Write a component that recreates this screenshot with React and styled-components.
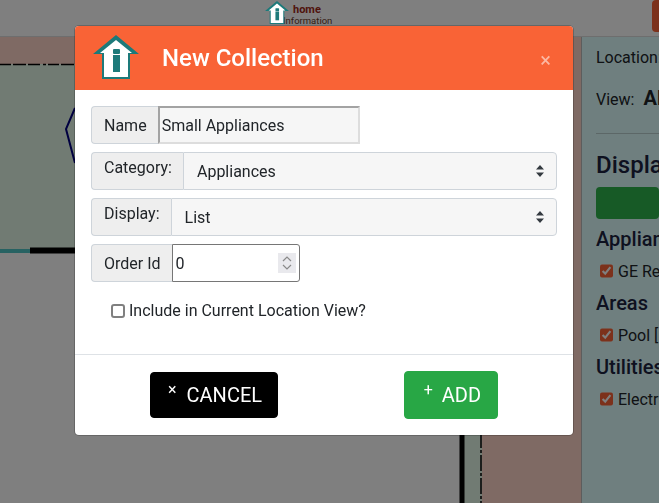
import React from 'react'
import styled, { createGlobalStyle } from 'styled-components'

const GlobalStyle = createGlobalStyle`
  html, body {
    margin: 0;
    height: 100%;
    overflow: hidden;
    font-family: Roboto, "Liberation Sans", sans-serif;
    font-size: 16px;
    color: #212529;
  }
`;

const Page = styled.div`
  width: 659px;
  height: 503px;
  display: flex;
  flex-direction: column;
  background: #fff;
  overflow: hidden;
`;

const Header = styled.header`
  height: 37px;
  flex: none;
  display: flex;
  justify-content: flex-end;
  position: relative;
  border-bottom: 1px solid #ddd;
  box-sizing: border-box;
`;

const Brand = styled.div`
  position: absolute;
  left: 265px;
  top: 1px;
  display: flex;
`;

const BrandMark = styled.div`
  position: relative;
  z-index: 1;
  height: 24px;
`;

const BrandText = styled.div`
  margin-left: -6px;
  padding-top: 3px;
  font-size: 9.5px;
  line-height: 11px;
  color: #6a3a2a;
`;

const BrandName = styled.div`
  margin-left: 10px;
  font-size: 11px;
  font-weight: 700;
  color: #a02818;
`;

const HeaderButton = styled.div`
  width: 20px;
  height: 32px;
  margin-right: -13px;
  border-radius: 4px;
  background: #f96336;
`;

const Main = styled.main`
  flex: 1;
  display: flex;
  min-height: 0;
`;

const Canvas = styled.div`
  width: 581px;
  flex: none;
  height: 100%;
`;

const Plan = styled.svg`
  display: block;
`;

const Sidebar = styled.aside`
  flex: 1;
  min-width: 0;
  overflow: hidden;
  white-space: nowrap;
  padding: 9px 0 0 14px;
  background: #deffff;
  border-left: 1px solid #bbb;
  box-sizing: border-box;
`;

const SideLine = styled.div`
  line-height: 24px;
  margin-bottom: ${p => p.$gap || 0}px;
  b { font-weight: 700; font-size: 20px; margin-left: 5px; }
`;

const SideRule = styled.hr`
  border: 0;
  border-top: 1px solid #b9cfcf;
  margin: 21px 0 17px;
`;

const SideTitle = styled.div`
  font-size: 24px;
  font-weight: 500;
  line-height: 28px;
  color: #1c2340;
`;

const SideButton = styled.div`
  height: 32px;
  margin: 8px 0;
  border-radius: 4px;
  background: #2eb44c;
`;

const SideGroup = styled.div`
  font-size: 20px;
  font-weight: 500;
  line-height: 24px;
  color: #1c2340;
`;

const SideItem = styled.label`
  display: flex;
  align-items: center;
  gap: 5px;
  height: 24px;
  padding-left: 4px;
  margin: 8px 0;
`;

const SideCheck = styled.input`
  width: 14px;
  height: 14px;
  margin: 0;
  accent-color: #f96336;
`;

const Overlay = styled.div`
  position: fixed;
  inset: 0;
  padding: 26px 0 0 75px;
  background: rgba(0, 0, 0, 0.5);
`;

const Modal = styled.div`
  width: 498px;
  height: 409px;
  display: flex;
  flex-direction: column;
  background: #fff;
  border-radius: 4px;
  overflow: hidden;
  box-shadow: 0 0 0 1px rgba(0, 0, 0, 0.2);
`;

const ModalHeader = styled.div`
  height: 64px;
  flex: none;
  display: flex;
  align-items: center;
  padding: 0 22px 0 18px;
  background: #f96336;
  color: #fff;
`;

const ModalTitle = styled.h2`
  flex: 1;
  margin: 0 0 0 23px;
  font-size: 24px;
  font-weight: 500;
  line-height: 1.2;
`;

const CloseX = styled.span`
  font-size: 20px;
  line-height: 20px;
  padding-top: 4px;
  opacity: 0.55;
`;

const ModalBody = styled.div`
  flex: 1;
  padding: 16px 16px 0;
  display: flex;
  flex-direction: column;
  gap: 8px;
`;

const Group = styled.div`
  height: 38px;
  display: flex;
  align-self: ${p => (p.$fit ? 'flex-start' : 'stretch')};
`;

const GroupLabel = styled.label`
  display: flex;
  align-items: ${p => (p.$top ? 'flex-start' : 'center')};
  padding: ${p => (p.$top ? '3px 11px 0 12px' : '1px 11px 0 12px')};
  line-height: 24px;
  background: #eee;
  border: 1px solid #ced4da;
  border-right: 0;
  border-radius: 4px 0 0 4px;
`;

const NameInput = styled.input`
  width: 202px;
  box-sizing: border-box;
  padding: 1px 2px;
  font: inherit;
  color: #212529;
  background: #f6f6f6;
  border: 2px solid #a3a3a3;
  border-right-color: #ddd;
  border-bottom-color: #ddd;
  outline: 0;
`;

const SelectWrap = styled.div`
  flex: 1;
  position: relative;
`;

const Select = styled.select`
  width: 100%;
  height: 100%;
  appearance: none;
  padding: 0 13px;
  font: inherit;
  color: #212529;
  background: #f6f6f6;
  border: 1px solid #ced4da;
  border-radius: 0 4px 4px 0;
  outline: 0;
`;

const SelectArrows = styled.svg`
  position: absolute;
  right: 12px;
  top: 13px;
`;

const NumberWrap = styled.div`
  width: 128px;
  position: relative;
`;

const NumberInput = styled.input`
  width: 100%;
  height: 100%;
  box-sizing: border-box;
  padding: 1px 3px;
  font: inherit;
  color: #212529;
  background: #fff;
  border: 1px solid #767676;
  border-radius: 0 3px 3px 0;
  outline: 0;
  appearance: textfield;
  &::-webkit-inner-spin-button {
    appearance: none;
  }
`;

const Spinner = styled.svg`
  position: absolute;
  right: 4px;
  top: 9px;
`;

const CheckRow = styled.label`
  display: flex;
  align-items: center;
  gap: 4px;
  margin: 9px 0 0 20px;
  line-height: 24px;
`;

const PlainCheck = styled.input`
  appearance: none;
  width: 14px;
  height: 14px;
  margin: 0;
  background: #fff;
  border: 2px solid #808080;
  border-radius: 3px;
  box-sizing: border-box;
`;

const ModalFooter = styled.div`
  height: 80px;
  flex: none;
  display: flex;
  align-items: center;
  justify-content: space-between;
  padding: 0 75px;
  border-top: 1px solid #dee2e6;
`;

const ActionButton = styled.button`
  display: flex;
  align-items: center;
  height: ${p => (p.$add ? 48 : 46)}px;
  padding: ${p => (p.$add ? '0 16px 0 19px' : '0 15px 0 17px')};
  font-family: inherit;
  font-size: 20px;
  color: #fff;
  text-transform: uppercase;
  background: ${p => (p.$add ? '#28a745' : '#000')};
  border: 1px solid ${p => (p.$add ? '#28a745' : '#000')};
  border-radius: 4px;
`;

const ButtonGlyph = styled.span`
  margin: -10px ${p => (p.$add ? 9 : 10)}px 0 0;
  font-size: 16px;
  line-height: 16px;
`;

function HouseLogo({ size }) {
  return (
    <svg width={size} height={size} viewBox="0 0 46 46">
      <path d="M23 0 L46 19 H37 V44 H9 V19 H0 Z" fill="#1d7a7a" />
      <path d="M23 5 L39 18 H35 V42 H11 V18 H7 Z" fill="#fff" />
      <rect x="20" y="14" width="7" height="5" rx="1" fill="#1d7a7a" />
      <rect x="20" y="20" width="7" height="17" fill="#1d7a7a" />
    </svg>
  )
}

function FloorPlan() {
  return (
    <Plan width="581" height="466" viewBox="0 37 581 466">
      <rect x="0" y="37" width="581" height="466" fill="#fff" />
      <rect x="0" y="37" width="581" height="27" fill="#ffd4c8" />
      <rect x="482" y="37" width="99" height="466" fill="#ffd4c8" />
      <rect x="0" y="64" width="482" height="186" fill="#e2f6e6" />
      <rect x="464" y="250" width="18" height="253" fill="#e2f6e6" />
      <line x1="0" y1="64.5" x2="482" y2="64.5" stroke="#000" strokeWidth="1.5" strokeDasharray="11 2 13 2 12 3 3 2" />
      <line x1="481" y1="64" x2="481" y2="503" stroke="#000" strokeWidth="1.5" strokeDasharray="16 2 3 2" />
      <line x1="0" y1="251" x2="30" y2="251" stroke="#4fc4c4" strokeWidth="4" />
      <line x1="30" y1="250.5" x2="464" y2="250.5" stroke="#000" strokeWidth="6" />
      <line x1="462" y1="250" x2="462" y2="503" stroke="#000" strokeWidth="5" />
      <polyline points="75,108 66,129 75,163" fill="none" stroke="#000080" strokeWidth="2" />
    </Plan>
  )
}

export default function App() {
  return (
    <Page>
      <GlobalStyle />
      <Header>
        <Brand>
          <BrandMark><HouseLogo size={24} /></BrandMark>
          <BrandText>
            <BrandName>home</BrandName>
            Information
          </BrandText>
        </Brand>
        <HeaderButton />
      </Header>
      <Main>
        <Canvas>
          <FloorPlan />
        </Canvas>
        <Sidebar>
          <SideLine $gap={16}>Location: Home</SideLine>
          <SideLine>View: <b>All</b></SideLine>
          <SideRule />
          <SideTitle>Display</SideTitle>
          <SideButton />
          <SideGroup>Appliances</SideGroup>
          <SideItem><SideCheck type="checkbox" defaultChecked />GE Refrigerator</SideItem>
          <SideGroup>Areas</SideGroup>
          <SideItem><SideCheck type="checkbox" defaultChecked />Pool [1]</SideItem>
          <SideGroup>Utilities</SideGroup>
          <SideItem><SideCheck type="checkbox" defaultChecked />Electricity</SideItem>
        </Sidebar>
      </Main>
      <Overlay>
        <Modal>
          <ModalHeader>
            <HouseLogo size={46} />
            <ModalTitle>New Collection</ModalTitle>
            <CloseX>×</CloseX>
          </ModalHeader>
          <ModalBody>
            <Group $fit>
              <GroupLabel>Name</GroupLabel>
              <NameInput defaultValue="Small Appliances" />
            </Group>
            <Group>
              <GroupLabel $top>Category:</GroupLabel>
              <SelectWrap>
                <Select defaultValue="Appliances"><option>Appliances</option></Select>
                <SelectArrows width="10" height="12" viewBox="0 0 10 12">
                  <path d="M5 0 L9 4.5 H1 Z M5 12 L9 7.5 H1 Z" fill="#343a40" />
                </SelectArrows>
              </SelectWrap>
            </Group>
            <Group>
              <GroupLabel $top>Display:</GroupLabel>
              <SelectWrap>
                <Select defaultValue="List"><option>List</option></Select>
                <SelectArrows width="10" height="12" viewBox="0 0 10 12">
                  <path d="M5 0 L9 4.5 H1 Z M5 12 L9 7.5 H1 Z" fill="#343a40" />
                </SelectArrows>
              </SelectWrap>
            </Group>
            <Group $fit>
              <GroupLabel>Order Id</GroupLabel>
              <NumberWrap>
                <NumberInput type="number" defaultValue="0" />
                <Spinner width="18" height="20" viewBox="0 0 18 20">
                  <rect width="18" height="20" fill="#e9e9ed" />
                  <path d="M5 8 L9 4 L13 8 M5 12 L9 16 L13 12" fill="none" stroke="#8a8a8a" strokeWidth="1.2" />
                </Spinner>
              </NumberWrap>
            </Group>
            <CheckRow><PlainCheck type="checkbox" />Include in Current Location View?</CheckRow>
          </ModalBody>
          <ModalFooter>
            <ActionButton><ButtonGlyph>×</ButtonGlyph>Cancel</ActionButton>
            <ActionButton $add><ButtonGlyph $add>+</ButtonGlyph>Add</ActionButton>
          </ModalFooter>
        </Modal>
      </Overlay>
    </Page>
  )
}
